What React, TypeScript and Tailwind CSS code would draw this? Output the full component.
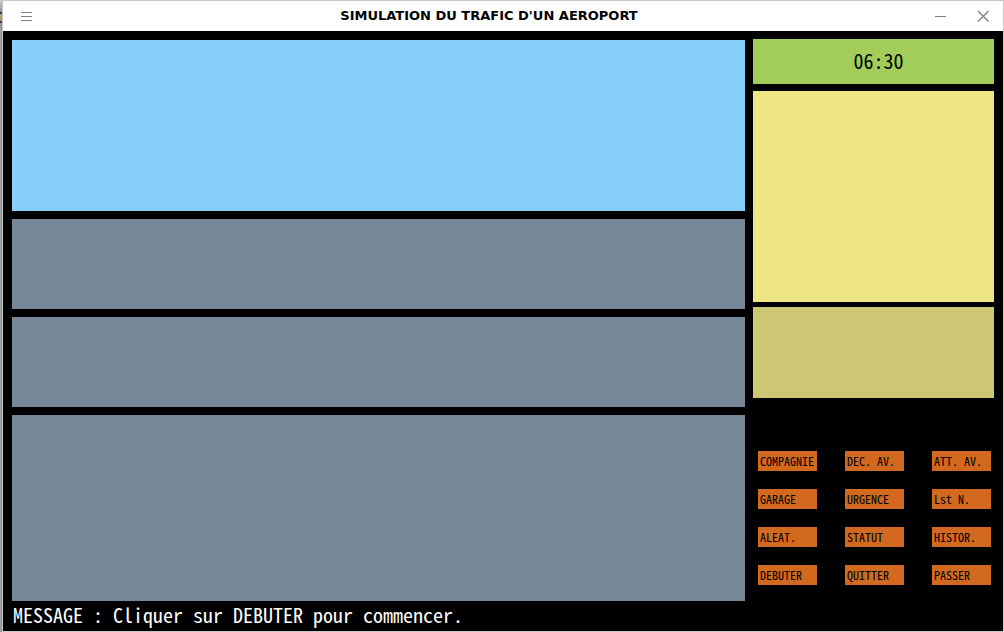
const actions = [
  'COMPAGNIE', 'DEC. AV.', 'ATT. AV.',
  'GARAGE', 'URGENCE', 'Lst N.',
  'ALEAT.', 'STATUT', 'HISTOR.',
  'DEBUTER', 'QUITTER', 'PASSER',
];

function TitleBar() {
  return (
    <header className="grid h-[30px] grid-cols-[1fr_auto_1fr] items-center bg-white pr-3 pl-4 text-[#808080]">
      <button type="button" aria-label="Menu" className="flex size-4 items-center justify-center justify-self-start">
        <svg width="16" height="16" viewBox="0 0 16 16" stroke="currentColor" shapeRendering="crispEdges">
          <path d="M2 4.5h11M2 8.5h11M2 12.5h11" />
        </svg>
      </button>
      <h1 className="pr-8 font-['DejaVu_Sans',sans-serif] text-[13px] leading-5 font-bold text-black">
        SIMULATION DU TRAFIC D'UN AEROPORT
      </h1>
      <div className="flex items-center gap-7 justify-self-end">
        <button type="button" aria-label="Réduire" className="flex size-4 items-center justify-center">
          <svg width="16" height="16" viewBox="0 0 16 16" stroke="currentColor" shapeRendering="crispEdges">
            <path d="M4 8.5h11" />
          </svg>
        </button>
        <button type="button" aria-label="Fermer" className="flex size-4 items-center justify-center">
          <svg width="16" height="16" viewBox="0 0 16 16" stroke="currentColor" strokeWidth="1.4">
            <path d="M3 3l10.500 10.500M13.500 3L3 13.500" />
          </svg>
        </button>
      </div>
    </header>
  );
}

function DesktopEdge() {
  return (
    <div aria-hidden="true" className="flex w-[2px] shrink-0 flex-col bg-linear-to-r from-[#a8a8a8] to-[#888888]">
      <div className="h-3 bg-linear-to-b from-[#d0d0d0] to-[#909090]" />
      <div className="h-[11px] border-y-2 border-[#3a3a40] bg-[#b39a68]" />
    </div>
  );
}

export default function App() {
  return (
    <div className="flex min-h-screen bg-black font-['Noto_Sans_Mono_CJK_JP','Liberation_Mono',monospace]">
      <DesktopEdge />
      <div className="flex min-w-0 flex-1 flex-col border border-[#c8c8cc]">
        <TitleBar />
        <main className="grid flex-1 grid-cols-[733fr_241fr] gap-x-2 px-[9px] pt-2">
          <div className="flex flex-col gap-2 pt-px">
            <section aria-label="Ciel" className="min-h-[171px] bg-[#87cefa]" />
            <section aria-label="Piste 1" className="min-h-[90px] bg-[#778899]" />
            <section aria-label="Piste 2" className="min-h-[90px] bg-[#778899]" />
            <section aria-label="Parking" className="min-h-[186px] flex-1 bg-[#778899]" />
          </div>
          <aside className="flex flex-col">
            <div className="flex h-[45px] items-center justify-center bg-[#a2cd5a] pb-[2px] pl-[10px] text-[20px] leading-5 text-black">
              <time>06:30</time>
            </div>
            <section aria-label="Informations" className="mt-[7px] min-h-[211px] bg-[#eee685]" />
            <section aria-label="Détails" className="mt-[5px] min-h-[91px] bg-[#cdc673]" />
            <nav aria-label="Commandes" className="mt-[53px] grid grid-cols-3 gap-x-7 gap-y-[18px] pr-[3px] pl-[5px]">
              {actions.map((label) => (
                <button
                  key={label}
                  type="button"
                  className="h-5 bg-[#d2691e] px-[2px] text-left text-[12px] leading-5 whitespace-nowrap text-black"
                >
                  {label}
                </button>
              ))}
            </nav>
          </aside>
        </main>
        <p role="status" className="px-[10px] pt-1 pb-[6px] text-[20px] leading-5 whitespace-nowrap text-white">
          MESSAGE : Cliquer sur DEBUTER pour commencer.
        </p>
      </div>
    </div>
  );
}
